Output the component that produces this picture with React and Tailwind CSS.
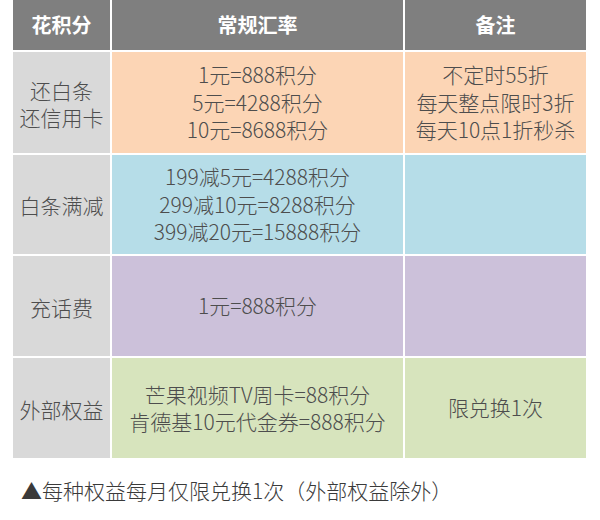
const rows = [
    {
        name: ['还白条', '还信用卡'],
        rate: ['1元=888积分', '5元=4288积分', '10元=8688积分'],
        note: ['不定时55折', '每天整点限时3折', '每天10点1折秒杀'],
        bg: 'bg-[#fcd5b5]',
        h: 'h-[101px]',
    },
    {
        name: ['白条满减'],
        rate: ['199减5元=4288积分', '299减10元=8288积分', '399减20元=15888积分'],
        note: [],
        bg: 'bg-[#b6dde8]',
        h: 'h-[99px]',
    },
    {
        name: ['充话费'],
        rate: ['1元=888积分'],
        note: [],
        bg: 'bg-[#ccc1da]',
        h: 'h-[100px]',
    },
    {
        name: ['外部权益'],
        rate: ['芒果视频TV周卡=88积分', '肯德基10元代金券=888积分'],
        note: ['限兑换1次'],
        bg: 'bg-[#d7e4bd]',
        h: 'h-[100px]',
    },
];

function Lines({ lines }) {
    return (
        <div className="flex flex-col items-center leading-[27.5px]">
            {lines.map((line) => (
                <span key={line}>{line}</span>
            ))}
        </div>
    );
}

export default function App() {
    return (
        <div className="h-[520px] w-[600px] bg-white font-['Noto_Sans_CJK_SC',sans-serif] text-[21px] font-light text-[#4d4d4d]">
            <div className="ml-[13px] grid w-[573px] grid-cols-[97px_291px_181px] gap-[2px]">
                <div className="flex h-[50px] items-center justify-center bg-[#7f7f7f] text-[20px] font-bold text-white">花积分</div>
                <div className="flex h-[50px] items-center justify-center bg-[#7f7f7f] text-[20px] font-bold text-white">常规汇率</div>
                <div className="flex h-[50px] items-center justify-center bg-[#7f7f7f] text-[20px] font-bold text-white">备注</div>

                {rows.map((row) => (
                    <div key={row.name.join('')} className="contents">
                        <div className={`flex ${row.h} items-center justify-center bg-[#d9d9d9] pt-[3px]`}>
                            <Lines lines={row.name} />
                        </div>
                        <div className={`flex ${row.h} items-center justify-center ${row.bg}`}>
                            <Lines lines={row.rate} />
                        </div>
                        <div className={`flex ${row.h} items-center justify-center ${row.bg}`}>
                            <Lines lines={row.note} />
                        </div>
                    </div>
                ))}
            </div>

            <p className="ml-[21px] mt-[18px] text-[21px] leading-[28px] text-[#3a3a3a]">▲每种权益每月仅限兑换1次（外部权益除外）</p>
        </div>
    );
}
